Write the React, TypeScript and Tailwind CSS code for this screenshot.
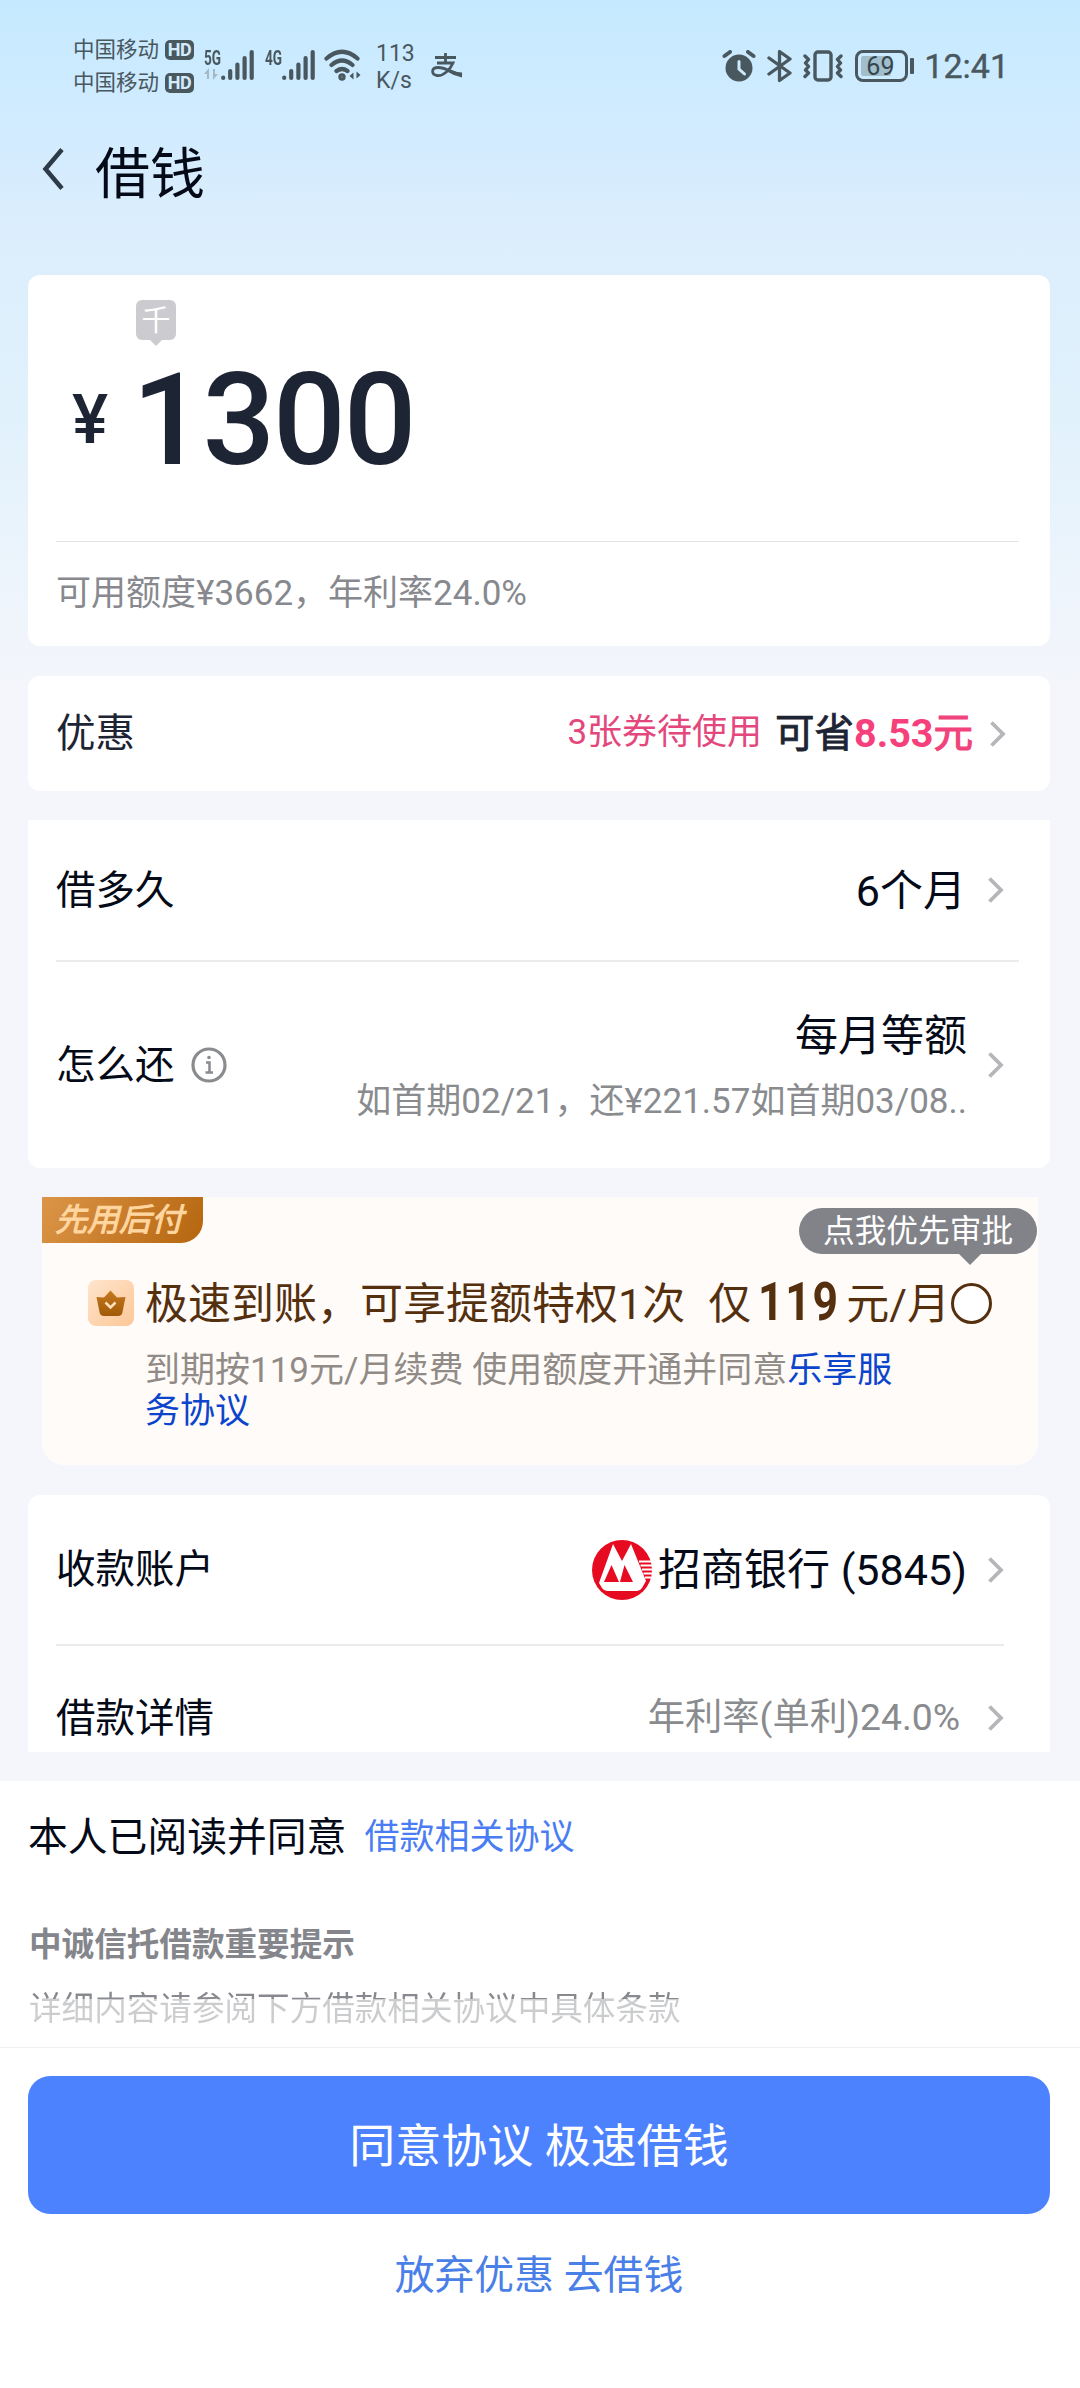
import React from "react";

const ink = "#49585f";

function Chevron() {
  return (
    <svg width="16" height="28" viewBox="0 0 16 28" fill="none" className="shrink-0">
      <path d="M1.500 2.500L13 14L1.500 25.500" stroke="#b4b6b9" strokeWidth="3.800" />
    </svg>
  );
}

function Bars() {
  return (
    <svg width="33" height="32" viewBox="0 0 33 32" stroke={ink} strokeWidth="4.200" strokeLinecap="round">
      <path d="M2.200 28.500V29M9.200 22V29M16.400 15.500V29M23.600 9V29M30.700 3V29" />
    </svg>
  );
}

function Hd() {
  return (
    <span className="flex h-[20px] w-[29px] items-center justify-center rounded-[5px] bg-[#49585f] text-[18px] font-bold leading-none tracking-[-0.5px] text-[#d3ecfd]">
      HD
    </span>
  );
}

function StatusBar() {
  return (
    <div className="flex h-[120px] items-start pl-[73px] pr-[71px] pt-[33px] text-[#49585f]">
      <div className="flex flex-col">
        {[0, 1].map((i) => (
          <div key={i} className="flex h-[33px] items-center gap-[6px] text-[21.5px] leading-none">
            <span>中国移动</span>
            <Hd />
          </div>
        ))}
      </div>
      <div className="ml-[10px] mt-[16px] flex">
        <div className="flex w-[17px] flex-col">
          <span className="origin-left scale-x-[0.68] text-[20px] font-bold leading-[18px]">5G</span>
          <svg width="15" height="13" viewBox="0 0 15 13" className="mt-[1px]" fill="#a3bac6">
            <path d="M0 6L5 0V11H3V6ZM14 6L9 12V1H11V6Z" />
          </svg>
        </div>
        <Bars />
      </div>
      <div className="ml-[11px] mt-[16px] flex">
        <div className="w-[17px]">
          <span className="block origin-left scale-x-[0.68] text-[20px] font-bold leading-[18px]">4G</span>
        </div>
        <Bars />
      </div>
      <svg width="38" height="34" viewBox="0 0 38 34" fill="none" stroke={ink} strokeWidth="4.200" strokeLinecap="round" className="ml-[9px] mt-[15px]">
        <path d="M2.500 10.500Q18 -3 33.500 10.500M7.500 17Q18 8 28.500 17M12.500 23Q18 19 23.500 23" />
        <circle cx="18" cy="29" r="1.600" />
        <path d="M25.500 28L29.500 24.500V31.500ZM36.500 27L32.500 23.500V30.500Z" fill={ink} stroke="none" />
      </svg>
      <div className="ml-[14px] mt-[7px] flex w-[40px] flex-col text-[23px] leading-[27px]">
        <span>113</span>
        <span>K/s</span>
      </div>
      <svg width="33" height="26" viewBox="0 0 33 26" fill="none" stroke={ink} strokeWidth="2.800" className="ml-[14px] mt-[20px]">
        <path d="M5 4.500H26M15.500 0V10M7 10H23C20 17 13 23.500 7 22.500C1 21.500 1 14.500 8 14.500C16 14.500 21 19.500 32 22" />
        <path d="M19 16.500Q25 19 32 19.500V24.500Q24 23 17 18.500Z" fill={ink} stroke="none" />
      </svg>
      <div className="ml-auto flex items-center pt-[16px]">
        <svg width="34" height="32" viewBox="0 0 34 32" fill="none">
          <circle cx="17" cy="18" r="13.500" fill={ink} />
          <path d="M2.500 6L8 2M31.500 6L26 2" stroke={ink} strokeWidth="4" strokeLinecap="round" />
          <path d="M17 11.500V19L22.500 24" stroke="#cdeafd" strokeWidth="3" strokeLinecap="round" />
        </svg>
        <svg width="26" height="34" viewBox="0 0 26 34" fill="none" stroke={ink} strokeWidth="3.300" strokeLinejoin="round" strokeLinecap="round" className="ml-[11px]">
          <path d="M2 9L23 24L12.500 31.500V2.500L23 10L2 25" />
        </svg>
        <svg width="40" height="32" viewBox="0 0 40 32" fill="none" stroke={ink} strokeWidth="3.400" strokeLinecap="round" strokeLinejoin="round" className="ml-[10px]">
          <rect x="12" y="2" width="16" height="28" rx="3" />
          <path d="M2 6L5.500 9.500L2.500 13L5.500 16.500L2.500 20L5.500 23L2 26.500M38 6L34.500 9.500L37.500 13L34.500 16.500L37.500 20L34.500 23L38 26.500" />
        </svg>
        <div className="ml-[12px] flex h-[32px] w-[53px] items-center rounded-[8px] border-[3px] border-[#49585f] p-[3px]">
          <div className="flex h-[20px] w-[30px] items-center justify-start rounded-[2px] bg-[#a2bdcb] pl-[5px] text-[25px] leading-none text-[#35464e]">69</div>
        </div>
        <div className="ml-[2px] h-[16px] w-[4px] rounded-[1px] bg-[#49585f]" />
        <span className="ml-[10px] text-[34px] leading-none [-webkit-text-stroke:0.4px_#49585f]">12:41</span>
      </div>
    </div>
  );
}

function BankLogo() {
  return (
    <svg width="60" height="62" viewBox="0 0 60 62" className="shrink-0">
      <circle cx="30" cy="31" r="30" fill="#e60b20" />
      <path d="M7 44L21 5L30 22L39 5L54 42L50 49Q48 52 45 52H15Q12 52 10 49Z" fill="#fff" />
      <path d="M12 43L19.500 26L27 43ZM28 43L32.500 26L41 43Z" fill="#e60b20" />
      <path d="M47 22.500H59M48.500 26.500H60M50 30.500H60M51.500 34.500H60M53 38.500H59" stroke="#fff" strokeWidth="1.800" />
    </svg>
  );
}

export default function App() {
  return (
    <div className="flex h-[2388px] w-[1080px] flex-col overflow-hidden bg-[#f5f6fb] bg-[linear-gradient(180deg,#c5eaff_0px,#d2ebff_130px,#dceefc_240px,#e0f1fc_400px,#f5f6fb_700px)] font-[Roboto,'Noto_Sans_CJK_SC',sans-serif] text-[#050a18]">
      <StatusBar />
      <header className="flex h-[155px] items-start pl-[42px] pt-[28px]">
        <svg width="22" height="42" viewBox="0 0 22 42" fill="none">
          <path d="M20 1.500L3.500 21L20 40.500" stroke="#2d3b48" strokeWidth="4.500" />
        </svg>
        <h1 className="ml-[31px] mt-[-2px] text-[55px] leading-[56px]">借钱</h1>
      </header>

      <main className="flex flex-col pl-[28px] pr-[30px]">
        <section className="h-[371px] rounded-[12px] bg-white pl-[28px] pr-[31px] pt-[25px]">
          <div className="ml-[80px] flex w-[40px] flex-col items-center">
            <div className="flex h-[40px] w-[40px] items-center justify-center rounded-[6px] bg-[#ccccd0] pt-[2px] text-[29px] leading-none text-white">千</div>
            <svg width="16" height="6" viewBox="0 0 16 6"><path d="M2 0H14L8 6Z" fill="#ccccd0" /></svg>
          </div>
          <div className="mt-[10px] flex h-[128px] items-center pl-[16px] font-medium text-[#1d2433]">
            <span className="w-[60px] text-[68px] leading-none">¥</span>
            <span className="text-[128px] leading-[128px] tracking-[-2.2px]">1300</span>
          </div>
          <div className="mt-[57px] border-t border-[#e3e3e5] pt-[33px] text-[35px] leading-[38px] text-[#87898e]">可用额度¥3662，年利率24.0%</div>
        </section>

        <section className="mt-[30px] flex h-[115px] items-center rounded-[12px] bg-white pl-[28px] pr-[44px]">
          <span className="pt-[1px] text-[39.500px] text-[#1d2433]">优惠</span>
          <span className="ml-auto text-[35px] text-[#e4477c]">3张券待使用</span>
          <span className="ml-[13px] text-[39.500px] text-[#1d2433] [-webkit-text-stroke:0.8px]">可省<b className="font-bold text-[#f6407c] [-webkit-text-stroke:0px]">8.53</b><span className="text-[#f0437c] [-webkit-text-stroke:1.2px]">元</span></span>
          <span className="ml-[17px]"><Chevron /></span>
        </section>

        <section className="mt-[29px] h-[348px] rounded-b-[12px] bg-white pl-[28px] pr-[31px]">
          <div className="flex h-[142px] items-center border-b-2 border-[#ebebed] pr-[15px]">
            <span className="pt-[2px] text-[39.500px]">借多久</span>
            <span className="ml-auto pt-[2px] text-[43px]">6个月</span>
            <span className="ml-[22px]"><Chevron /></span>
          </div>
          <div className="flex h-[206px] items-center pr-[15px]">
            <span className="pt-[2px] text-[39.500px]">怎么还</span>
            <svg width="36" height="36" viewBox="0 0 36 36" fill="none" stroke="#898b8e" className="ml-[16px]">
              <circle cx="18" cy="18" r="16" strokeWidth="3.200" />
              <path d="M15 15.500H18.500V25M14.500 25.500H22" strokeWidth="2.500" />
              <circle cx="18" cy="10.500" r="1.800" fill="#898b8e" stroke="none" />
            </svg>
            <div className="ml-auto flex flex-col items-end pt-[7px]">
              <span className="text-[43px] leading-[60px]">每月等额</span>
              <span className="mt-[6px] text-[35px] leading-[60px] text-[#898b8e]">如首期02/21，还¥221.57如首期03/08..</span>
            </div>
            <span className="ml-[21px]"><Chevron /></span>
          </div>
        </section>

        <section className="relative ml-[14px] mr-[12px] mt-[29px] h-[268px] rounded-b-[22px] bg-[#fffbf8]">
          <div className="flex h-[46px] w-[161px] items-center rounded-br-[22px] bg-[linear-gradient(120deg,#dc9548,#b5650e)] pl-[13px] text-[32px] italic leading-none text-[#ffd6a0] [-webkit-text-stroke:1px]">先用后付</div>
          <div className="absolute right-[1px] top-[11px] flex h-[46px] w-[238px] items-center justify-center rounded-full bg-[#828389] pt-[2px] text-[31.700px] leading-none text-white">
            点我优先审批
            <svg width="22" height="11" viewBox="0 0 22 11" className="absolute right-[56px] top-[46px]"><path d="M0 0H22L11 11Z" fill="#828389" /></svg>
          </div>
          <div className="mt-[30px] flex h-[60px] items-center whitespace-pre pl-[46px] text-[43px] text-[#54300f]">
            <svg width="46" height="46" viewBox="0 0 46 46">
              <defs>
                <linearGradient id="box" x1="0" y1="0" x2="1" y2="1"><stop stopColor="#ffe4cc" /><stop offset="1" stopColor="#fcc798" /></linearGradient>
                <linearGradient id="crown" x1="0" y1="0" x2="0" y2="1"><stop stopColor="#c5781f" /><stop offset="1" stopColor="#a05a08" /></linearGradient>
              </defs>
              <rect width="46" height="46" rx="8" fill="url(#box)" />
              <path d="M8.500 17L16 17.500L22.500 10.500L29 17.500L37.500 17L34.500 32Q34 36 30 36H16Q12 36 11.500 32Z" fill="url(#crown)" />
              <path d="M17.500 22.500L22.500 27.500L27.500 22.500" fill="none" stroke="#ffe0bd" strokeWidth="2.500" />
            </svg>
            <span className="ml-[11px] pt-[2px]">极速到账，可享提额特权1次</span>
            <span className="ml-[23px] pt-[2px]">仅</span>
            <span className="ml-[7px] w-[80px] origin-left scale-x-[0.84] text-[53px] font-bold tracking-[2px]">119</span>
            <span className="ml-[8px] pt-[2px]">元/月</span>
            <span className="ml-[1px] h-[41px] w-[41px] shrink-0 rounded-full border-[3px] border-[#54300f] bg-white" />
          </div>
          <p className="ml-[103px] mt-[17px] w-[760px] text-[35px] leading-[41px] text-[#918b87]">到期按119元/月续费 使用额度开通并同意<span className="text-[#0c45cc]">乐享服<br />务协议</span></p>
        </section>

        <section className="mt-[30px] h-[257px] overflow-hidden rounded-t-[12px] bg-white pl-[28px] pr-[31px]">
          <div className="mr-[15px] flex h-[151px] items-center border-b-2 border-[#ebebed]">
            <span className="text-[39.500px]">收款账户</span>
            <span className="ml-auto"><BankLogo /></span>
            <span className="ml-[6px] pt-[2px] text-[43px]">招商银行 (5845)</span>
            <span className="ml-[21px]"><Chevron /></span>
          </div>
          <div className="flex h-[143px] items-center pr-[15px]">
            <span className="pt-[2px] text-[39.500px]">借款详情</span>
            <span className="ml-auto pt-[1px] text-[37.300px] text-[#898b8e]">年利率(单利)24.0%</span>
            <span className="ml-[28px]"><Chevron /></span>
          </div>
        </section>
      </main>

      <footer className="mt-[29px] flex grow flex-col bg-white">
        <div className="flex h-[112px] items-center pl-[28px] pt-[2px] text-[39.800px]">
          本人已阅读并同意<a className="ml-[18px] text-[35px] text-[#4a7df3]">借款相关协议</a>
        </div>
        <h2 className="mt-[28px] pl-[29px] text-[32.600px] font-bold leading-[48px] text-[#84868b]">中诚信托借款重要提示</h2>
        <p className="mt-[16px] bg-[linear-gradient(180deg,#87898e_14px,#cbccce_14px)] bg-clip-text pl-[29px] text-[32.600px] leading-[48px] text-transparent">详细内容请参阅下方借款相关协议中具体条款</p>
        <div className="mt-[14px] border-t border-[#f0f0f2] pl-[28px] pr-[30px] pt-[28px]">
          <button className="h-[138px] w-full rounded-[22px] bg-[#4d82ff] pt-[2px] text-[46px] text-white">同意协议 极速借钱</button>
        </div>
        <div className="mt-[32px] pr-[2px] text-center text-[39.800px] text-[#4a7fe8]">放弃优惠 去借钱</div>
      </footer>
    </div>
  );
}
